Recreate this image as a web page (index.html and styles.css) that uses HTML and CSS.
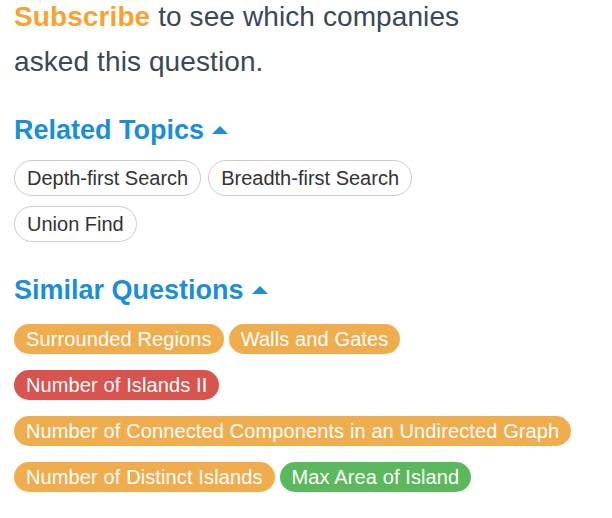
FILE: index.html
```html
<!DOCTYPE html>
<html>
<head>
<meta charset="utf-8">
<link rel="stylesheet" href="styles.css">
</head>
<body>
<div class="panel">
  <p class="intro"><span class="subscribe">Subscribe</span><span class="intro-rest"> to see which companies asked this question.</span></p>

  <h3 class="section-title">Related Topics <svg class="caret" width="16" height="8" viewBox="0 0 16 8"><path d="M0 8 L8 0 L16 8 Z" fill="#1b8fd6"/></svg></h3>
  <div class="pill-rows">
    <div class="pill-row">
      <span class="pill">Depth-first Search</span>
      <span class="pill">Breadth-first Search</span>
    </div>
    <div class="pill-row">
      <span class="pill">Union Find</span>
    </div>
  </div>

  <h3 class="section-title similar">Similar Questions <svg class="caret" width="16" height="8" viewBox="0 0 16 8"><path d="M0 8 L8 0 L16 8 Z" fill="#1b8fd6"/></svg></h3>
  <div class="tag-rows">
    <div class="tag-row">
      <span class="tag medium">Surrounded Regions</span>
      <span class="tag medium">Walls and Gates</span>
    </div>
    <div class="tag-row">
      <span class="tag hard">Number of Islands II</span>
    </div>
    <div class="tag-row">
      <span class="tag medium">Number of Connected Components in an Undirected Graph</span>
    </div>
    <div class="tag-row">
      <span class="tag medium">Number of Distinct Islands</span>
      <span class="tag easy">Max Area of Island</span>
    </div>
  </div>
</div>
</body>
</html>
```

FILE: styles.css
```css
html, body {
  margin: 0;
  padding: 0;
  background: #ffffff;
}

body {
  font-family: "Liberation Sans", Arial, sans-serif;
}

.panel {
  padding: 0 14px;
}

.intro {
  margin: -6px 0 0 0;
  max-width: 470px;
  font-size: 28px;
  line-height: 45px;
  letter-spacing: 0.1px;
  color: #3a4759;
}

.subscribe {
  color: #f9a233;
  font-weight: bold;
}

.section-title {
  margin: 28px 0 0 0;
  font-size: 27px;
  line-height: 36px;
  font-weight: bold;
  color: #1b8fd6;
  display: flex;
  align-items: center;
}

.section-title.similar {
  margin-top: 30px;
}

.caret {
  margin-left: 8px;
  margin-top: -1px;
}

.pill-rows {
  margin-top: 12px;
  display: flex;
  flex-direction: column;
  gap: 10px;
}

.pill-row {
  display: flex;
  gap: 7px;
}

.pill {
  border: 1px solid #cccccc;
  border-radius: 18px;
  padding: 0 12px;
  font-size: 20px;
  line-height: 34px;
  color: #333333;
}

.tag-rows {
  margin-top: 16px;
  display: flex;
  flex-direction: column;
  gap: 16px;
}

.tag-row {
  display: flex;
  gap: 5px;
}

.tag {
  border-radius: 15px;
  padding: 0 12px;
  font-size: 20px;
  line-height: 30px;
  letter-spacing: 0.12px;
  color: #ffffff;
}

.tag.medium {
  background: #f0ad4e;
}

.tag.hard {
  background: #d9534f;
}

.tag.easy {
  background: #5cb85c;
}
```
